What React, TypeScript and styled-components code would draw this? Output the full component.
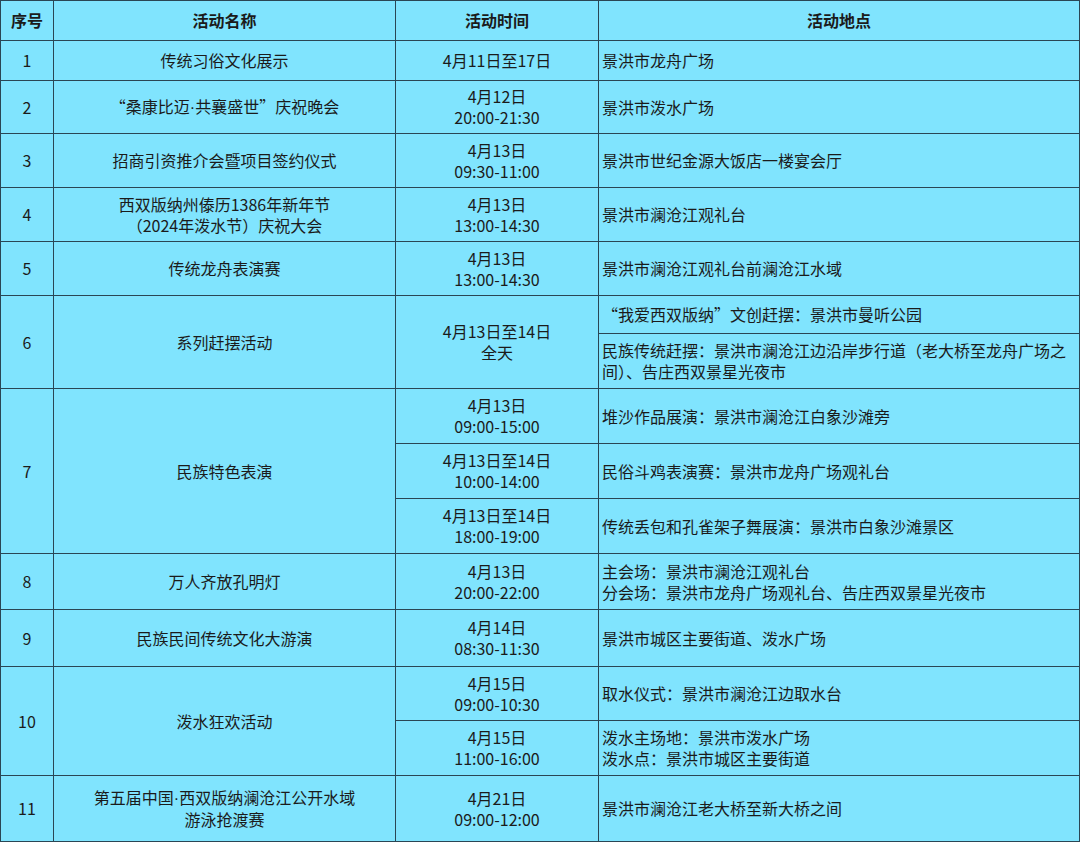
import React from "react";
import styled, { createGlobalStyle } from "styled-components";

const GlobalStyle = createGlobalStyle`
  html, body {
    margin: 0;
    padding: 0;
    background: #80e4fe;
  }
  body {
    font-family: "Noto Sans CJK SC", "Noto Sans", sans-serif;
    color: #1b1b1b;
  }
`;

const Table = styled.table`
  width: 1080px;
  border-collapse: collapse;
  table-layout: fixed;
  background: #80e4fe;
  font-size: 16px;
  line-height: 21px;
`;

const Row = styled.tr<{ $h: number }>`
  height: ${(p) => p.$h}px;
`;

const HeadCell = styled.th`
  border: 1px solid #2a4654;
  font-weight: 700;
  font-size: 16px;
  text-align: center;
  vertical-align: middle;
  padding: 0;
`;

const Cell = styled.td<{ $left?: boolean }>`
  border: 1px solid #2a4654;
  text-align: ${(p) => (p.$left ? "left" : "center")};
  vertical-align: middle;
  padding: ${(p) => (p.$left ? "0 4px 0 3px" : "0 2px")};
  white-space: pre-line;
`;

const Dot = styled.span`
  font-family: "Liberation Sans", sans-serif;
`;

// split out the middle dot so it renders narrow, as in the source
const withDots = (s: string) =>
  s.split("·").flatMap((part, i) => (i === 0 ? [part] : [<Dot key={i}>·</Dot>, part]));

type Sub = { time: string; place: string; h: number };
type Item = { no: number; name: string; subs: Sub[]; sharedTime?: boolean };

const items: Item[] = [
  { no: 1, name: "传统习俗文化展示", subs: [{ time: "4月11日至17日", place: "景洪市龙舟广场", h: 40 }] },
  { no: 2, name: "“桑康比迈·共襄盛世”庆祝晚会", subs: [{ time: "4月12日\n20:00-21:30", place: "景洪市泼水广场", h: 53 }] },
  { no: 3, name: "招商引资推介会暨项目签约仪式", subs: [{ time: "4月13日\n09:30-11:00", place: "景洪市世纪金源大饭店一楼宴会厅", h: 54 }] },
  { no: 4, name: "西双版纳州傣历1386年新年节\n（2024年泼水节）庆祝大会", subs: [{ time: "4月13日\n13:00-14:30", place: "景洪市澜沧江观礼台", h: 54 }] },
  { no: 5, name: "传统龙舟表演赛", subs: [{ time: "4月13日\n13:00-14:30", place: "景洪市澜沧江观礼台前澜沧江水域", h: 54 }] },
  {
    no: 6,
    name: "系列赶摆活动",
    sharedTime: true,
    subs: [
      { time: "4月13日至14日\n全天", place: "“我爱西双版纳”文创赶摆：景洪市曼听公园", h: 38 },
      { time: "", place: "民族传统赶摆：景洪市澜沧江边沿岸步行道（老大桥至龙舟广场之间）、告庄西双景星光夜市", h: 55 },
    ],
  },
  {
    no: 7,
    name: "民族特色表演",
    subs: [
      { time: "4月13日\n09:00-15:00", place: "堆沙作品展演：景洪市澜沧江白象沙滩旁", h: 55 },
      { time: "4月13日至14日\n10:00-14:00", place: "民俗斗鸡表演赛：景洪市龙舟广场观礼台", h: 55 },
      { time: "4月13日至14日\n18:00-19:00", place: "传统丢包和孔雀架子舞展演：景洪市白象沙滩景区", h: 55 },
    ],
  },
  { no: 8, name: "万人齐放孔明灯", subs: [{ time: "4月13日\n20:00-22:00", place: "主会场：景洪市澜沧江观礼台\n分会场：景洪市龙舟广场观礼台、告庄西双景星光夜市", h: 56 }] },
  { no: 9, name: "民族民间传统文化大游演", subs: [{ time: "4月14日\n08:30-11:30", place: "景洪市城区主要街道、泼水广场", h: 57 }] },
  {
    no: 10,
    name: "泼水狂欢活动",
    subs: [
      { time: "4月15日\n09:00-10:30", place: "取水仪式：景洪市澜沧江边取水台", h: 54 },
      { time: "4月15日\n11:00-16:00", place: "泼水主场地：景洪市泼水广场\n泼水点：景洪市城区主要街道", h: 55 },
    ],
  },
  { no: 11, name: "第五届中国·西双版纳澜沧江公开水域\n游泳抢渡赛", subs: [{ time: "4月21日\n09:00-12:00", place: "景洪市澜沧江老大桥至新大桥之间", h: 66 }] },
];

const App: React.FC = () => {
  return (
    <>
      <GlobalStyle />
      <Table>
        <colgroup>
          <col style={{ width: 53 }} />
          <col style={{ width: 342 }} />
          <col style={{ width: 203 }} />
          <col />
        </colgroup>
        <thead>
          <Row $h={40}>
            <HeadCell>序号</HeadCell>
            <HeadCell>活动名称</HeadCell>
            <HeadCell>活动时间</HeadCell>
            <HeadCell>活动地点</HeadCell>
          </Row>
        </thead>
        <tbody>
          {items.map((item) =>
            item.subs.map((sub, i) => (
              <Row key={`${item.no}-${i}`} $h={sub.h}>
                {i === 0 && (
                  <>
                    <Cell rowSpan={item.subs.length}>{item.no}</Cell>
                    <Cell rowSpan={item.subs.length}>{withDots(item.name)}</Cell>
                  </>
                )}
                {item.sharedTime ? (
                  i === 0 && <Cell rowSpan={item.subs.length}>{sub.time}</Cell>
                ) : (
                  <Cell>{sub.time}</Cell>
                )}
                <Cell $left>{sub.place}</Cell>
              </Row>
            ))
          )}
        </tbody>
      </Table>
    </>
  );
};

export default App;
